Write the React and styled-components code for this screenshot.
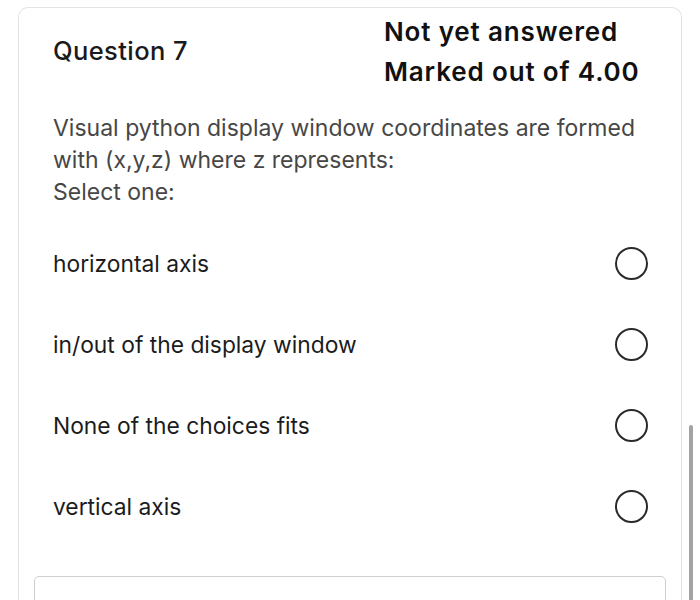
import React from 'react';
import styled, { createGlobalStyle } from 'styled-components';

const GlobalStyle = createGlobalStyle`
  html, body {
    margin: 0;
    padding: 0;
    background: #fff;
  }
  body {
    font-family: 'Inter', 'Liberation Sans', sans-serif;
    overflow: hidden;
  }
`;

const Page = styled.div`
  position: relative;
  height: 600px;
  padding: 7px 18px 0 18px;
  box-sizing: border-box;
  overflow: hidden;
`;

const Card = styled.div`
  border: 1px solid #e3e3e3;
  border-bottom: none;
  border-radius: 10px 10px 0 0;
  padding: 4px 33px 0 34px;
  height: 620px;
  box-sizing: border-box;
`;

const Header = styled.div`
  display: flex;
  justify-content: space-between;
  align-items: center;
  padding-right: 11px;
`;

const QuestionNo = styled.h3`
  margin: 0 0 4px 0;
  font-size: 25.5px;
  font-weight: 500;
  letter-spacing: 0.4px;
  color: #1a1a1a;
`;

const State = styled.div`
  display: flex;
  flex-direction: column;
  width: 253px;
`;

const StateLine = styled.div`
  font-size: 26px;
  font-weight: 600;
  letter-spacing: 0.85px;
  line-height: 40px;
  color: #111;
  white-space: nowrap;
`;

const Prompt = styled.div`
  margin-top: 20px;
  font-size: 23px;
  line-height: 32px;
  color: #474747;
`;

const Options = styled.div`
  margin-top: 15px;
  display: flex;
  flex-direction: column;
`;

const Option = styled.label`
  display: flex;
  align-items: center;
  justify-content: space-between;
  height: 81px;
  font-size: 22.8px;
  color: #1c1c1c;
`;

const Radio = styled.span`
  width: 29px;
  height: 29px;
  border: 2px solid #2a2a2a;
  border-radius: 50%;
  flex-shrink: 0;
`;

const AnswerBox = styled.div`
  margin: 29px -18px 0 -19px;
  height: 60px;
  border: 1px solid #cfcfcf;
  border-radius: 5px;
`;

const Scrollbar = styled.div`
  position: absolute;
  left: 689px;
  top: 425px;
  width: 4px;
  height: 190px;
  border-radius: 2px;
  background: #a3a3a3;
`;

const choices = [
  'horizontal axis',
  'in/out of the display window',
  'None of the choices fits',
  'vertical axis',
];

export default function App() {
  return (
    <>
      <GlobalStyle />
      <Page>
        <Card>
          <Header>
            <QuestionNo>Question 7</QuestionNo>
            <State>
              <StateLine>Not yet answered</StateLine>
              <StateLine>Marked out of 4.00</StateLine>
            </State>
          </Header>
          <Prompt>
            Visual python display window coordinates are formed with (x,y,z) where z represents:
            <br />
            Select one:
          </Prompt>
          <Options>
            {choices.map((c) => (
              <Option key={c}>
                <span>{c}</span>
                <Radio />
              </Option>
            ))}
          </Options>
          <AnswerBox />
        </Card>
        <Scrollbar />
      </Page>
    </>
  );
}
